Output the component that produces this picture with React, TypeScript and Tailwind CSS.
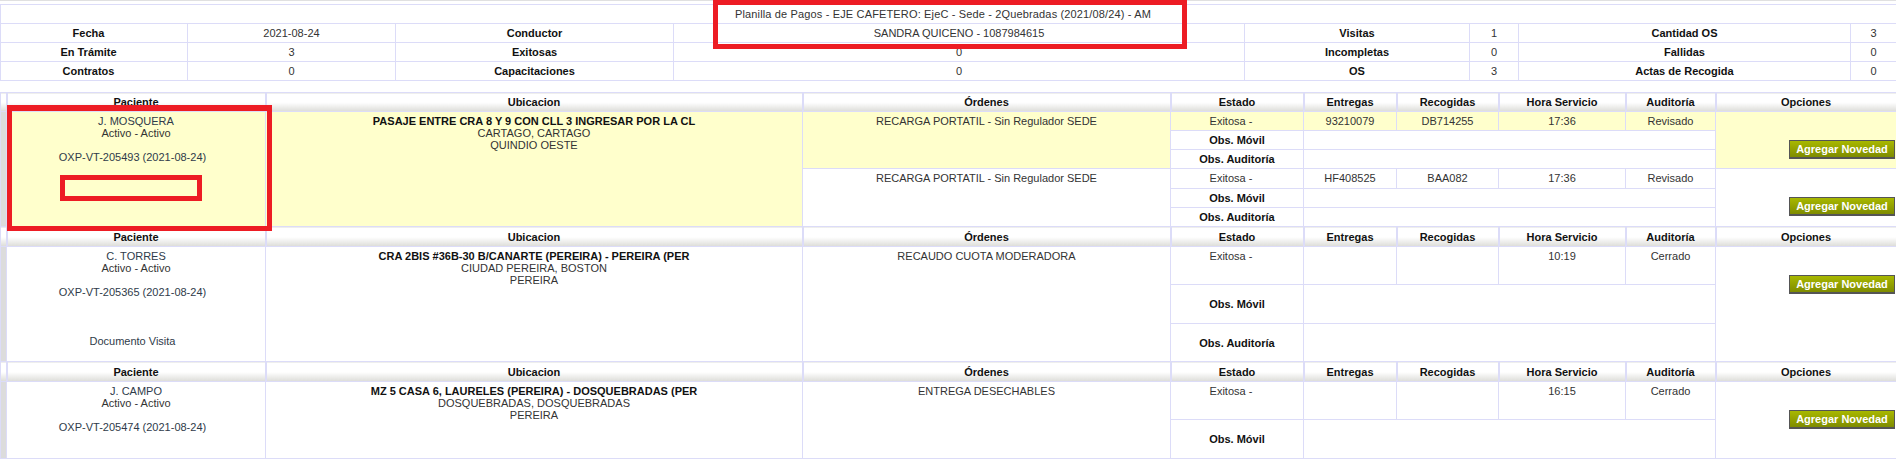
import React from "react";

const cellBorder = "border border-[#dcdcf8]";
const topCell = `${cellBorder} p-0 pt-[3px] text-center align-top`;

const SummaryRow = ({ cells }: { cells: string[] }) => (
  <tr className="h-[19px]">
    {cells.map((cell, i) => (
      <td
        key={i}
        className={`${cellBorder} p-0 text-center align-middle ${i % 2 === 0 ? "font-bold text-[#111]" : "text-[#333]"} ${i === 0 ? "pr-[11px]" : ""}`}
      >
        {cell}
      </td>
    ))}
  </tr>
);

const headerCell = `${cellBorder} border-r-2 bg-gradient-to-b from-white from-50% to-[#dcdcd8] p-0 text-center align-middle font-bold text-[#111]`;

const HeaderRow = ({ height = "h-[20px]" }: { height?: string }) => (
  <tr className={height}>
    <th className={headerCell} />
    {["Paciente", "Ubicacion", "Órdenes", "Estado", "Entregas", "Recogidas", "Hora Servicio", "Auditoría", "Opciones"].map((h) => (
      <th key={h} className={headerCell}>
        {h}
      </th>
    ))}
  </tr>
);

const Button = () => (
  <button className="h-[19px] w-[106px] border border-b-2 border-[#555] bg-gradient-to-b from-[#a8b800] to-[#7f8c00] p-0 text-center font-bold text-white">
    Agregar Novedad
  </button>
);

interface OrderLine {
  orden: string;
  entrega: string;
  recogida: string;
  hora: string;
  auditoria: string;
  bg: string;
}

const OrderRows = ({
  line,
  heights,
  rowSpan = 0,
  paciente,
  ubicacion,
}: {
  line: OrderLine;
  heights: string[];
  rowSpan?: number;
  paciente?: React.ReactNode;
  ubicacion?: React.ReactNode;
}) => {
  const first = rowSpan > 0;
  return (
    <>
      <tr className={heights[0]}>
        {first && <td rowSpan={rowSpan} className={`${cellBorder} bg-[#dcdcdc] p-0`} />}
        {first && (
          <td rowSpan={rowSpan} className={`${topCell} ${line.bg}`}>
            {paciente}
          </td>
        )}
        {first && (
          <td rowSpan={rowSpan} className={`${topCell} ${line.bg}`}>
            {ubicacion}
          </td>
        )}
        <td rowSpan={heights.length} className={`${topCell} ${line.bg}`}>
          {line.orden}
        </td>
        <td className={`${topCell} ${line.bg} pr-[12px]`}>Exitosa -</td>
        <td className={`${topCell} ${line.bg}`}>{line.entrega}</td>
        <td className={`${topCell} ${line.bg}`}>{line.recogida}</td>
        <td className={`${topCell} ${line.bg}`}>{line.hora}</td>
        <td className={`${topCell} ${line.bg}`}>{line.auditoria}</td>
        <td rowSpan={heights.length} className={`${cellBorder} ${line.bg} p-0 pr-[1px] pt-[28px] text-right align-top`}>
          <Button />
        </td>
      </tr>
      <tr className={heights[1]}>
        <td className={`${cellBorder} bg-white p-0 text-center align-middle font-bold text-[#111]`}>Obs. Móvil</td>
        <td colSpan={4} className={`${cellBorder} bg-white p-0`} />
      </tr>
      {heights[2] && (
        <tr className={heights[2]}>
          <td className={`${cellBorder} bg-white p-0 text-center align-middle font-bold text-[#111]`}>Obs. Auditoría</td>
          <td colSpan={4} className={`${cellBorder} bg-white p-0`} />
        </tr>
      )}
    </>
  );
};

const Paciente = ({ name, code, doc }: { name: string; code: string; doc?: string }) => (
  <div className="flex flex-col items-center">
    <span className="text-[#2f3b4a]">{name}</span>
    <span>Activo - Activo</span>
    <span className="mt-[12px] pr-[7px] text-[#2f3b4a]">{code}</span>
    {doc && <span className="mt-[37px] pr-[7px] text-[#2f3b4a]">{doc}</span>}
  </div>
);

const Ubicacion = ({ lines }: { lines: string[] }) => (
  <div className="flex flex-col items-center">
    <span className="font-bold text-[#111]">{lines[0]}</span>
    <span>{lines[1]}</span>
    <span>{lines[2]}</span>
  </div>
);

export default function App() {
  return (
    <div className="relative h-[459px] w-[1896px] overflow-hidden bg-white font-['Liberation_Sans',Arial,sans-serif] text-[11px] leading-[12px] text-[#333]">
      <div className="h-[1px] bg-[#e0e0e0]" />
      <table className="mt-[3px] w-[1896px] table-fixed border-collapse">
        <colgroup>
          <col className="w-[187px]" />
          <col className="w-[208px]" />
          <col className="w-[278px]" />
          <col className="w-[571px]" />
          <col className="w-[225px]" />
          <col className="w-[49px]" />
          <col className="w-[332px]" />
          <col className="w-[46px]" />
        </colgroup>
        <tbody>
          <tr className="h-[19px]">
            <td colSpan={8} className={`${cellBorder} p-0 pr-[11px] text-center align-middle tracking-[0.15px]`}>
              Planilla de Pagos - EJE CAFETERO: EjeC - Sede - 2Quebradas (2021/08/24) - AM
            </td>
          </tr>
          <SummaryRow cells={["Fecha", "2021-08-24", "Conductor", "SANDRA QUICENO - 1087984615", "Visitas", "1", "Cantidad OS", "3"]} />
          <SummaryRow cells={["En Trámite", "3", "Exitosas", "0", "Incompletas", "0", "Fallidas", "0"]} />
          <SummaryRow cells={["Contratos", "0", "Capacitaciones", "0", "OS", "3", "Actas de Recogida", "0"]} />
        </tbody>
      </table>

      <table className="mt-[11px] w-[1896px] table-fixed border-collapse">
        <colgroup>
          <col className="w-[6px]" />
          <col className="w-[259px]" />
          <col className="w-[537px]" />
          <col className="w-[368px]" />
          <col className="w-[133px]" />
          <col className="w-[93px]" />
          <col className="w-[102px]" />
          <col className="w-[127px]" />
          <col className="w-[90px]" />
          <col className="w-[181px]" />
        </colgroup>
        <tbody>
          <HeaderRow height="h-[19px]" />
          <OrderRows
            rowSpan={6}
            heights={["h-[19px]", "h-[19px]", "h-[19px]"]}
            line={{ orden: "RECARGA PORTATIL - Sin Regulador SEDE", entrega: "93210079", recogida: "DB714255", hora: "17:36", auditoria: "Revisado", bg: "bg-[#ffffcc]" }}
            paciente={<Paciente name="J. MOSQUERA" code="OXP-VT-205493 (2021-08-24)" />}
            ubicacion={<Ubicacion lines={["PASAJE ENTRE CRA 8 Y 9 CON CLL 3 INGRESAR POR LA CL", "CARTAGO, CARTAGO", "QUINDIO OESTE"]} />}
          />
          <OrderRows
            heights={["h-[20px]", "h-[19px]", "h-[19px]"]}
            line={{ orden: "RECARGA PORTATIL - Sin Regulador SEDE", entrega: "HF408525", recogida: "BAA082", hora: "17:36", auditoria: "Revisado", bg: "bg-white" }}
          />
          <HeaderRow />
          <OrderRows
            rowSpan={3}
            heights={["h-[38px]", "h-[39px]", "h-[38px]"]}
            line={{ orden: "RECAUDO CUOTA MODERADORA", entrega: "", recogida: "", hora: "10:19", auditoria: "Cerrado", bg: "bg-white" }}
            paciente={<Paciente name="C. TORRES" code="OXP-VT-205365 (2021-08-24)" doc="Documento Visita" />}
            ubicacion={<Ubicacion lines={["CRA 2BIS #36B-30 B/CANARTE (PEREIRA) - PEREIRA (PER", "CIUDAD PEREIRA, BOSTON", "PEREIRA"]} />}
          />
          <HeaderRow />
          <OrderRows
            rowSpan={2}
            heights={["h-[38px]", "h-[39px]"]}
            line={{ orden: "ENTREGA DESECHABLES", entrega: "", recogida: "", hora: "16:15", auditoria: "Cerrado", bg: "bg-white" }}
            paciente={<Paciente name="J. CAMPO" code="OXP-VT-205474 (2021-08-24)" />}
            ubicacion={<Ubicacion lines={["MZ 5 CASA 6, LAURELES (PEREIRA) - DOSQUEBRADAS (PER", "DOSQUEBRADAS, DOSQUEBRADAS", "PEREIRA"]} />}
          />
        </tbody>
      </table>

      {/* red highlight boxes drawn over the capture */}
      <div className="absolute left-[713px] top-0 h-[49px] w-[474px] border-[5px] border-[#ed1c24]" />
      <div className="absolute left-[7px] top-[105px] h-[126px] w-[265px] border-[5px] border-t-[6px] border-[#ed1c24]" />
      <div className="absolute left-[60px] top-[175px] h-[26px] w-[142px] border-[5px] border-[#ed1c24]" />
    </div>
  );
}
